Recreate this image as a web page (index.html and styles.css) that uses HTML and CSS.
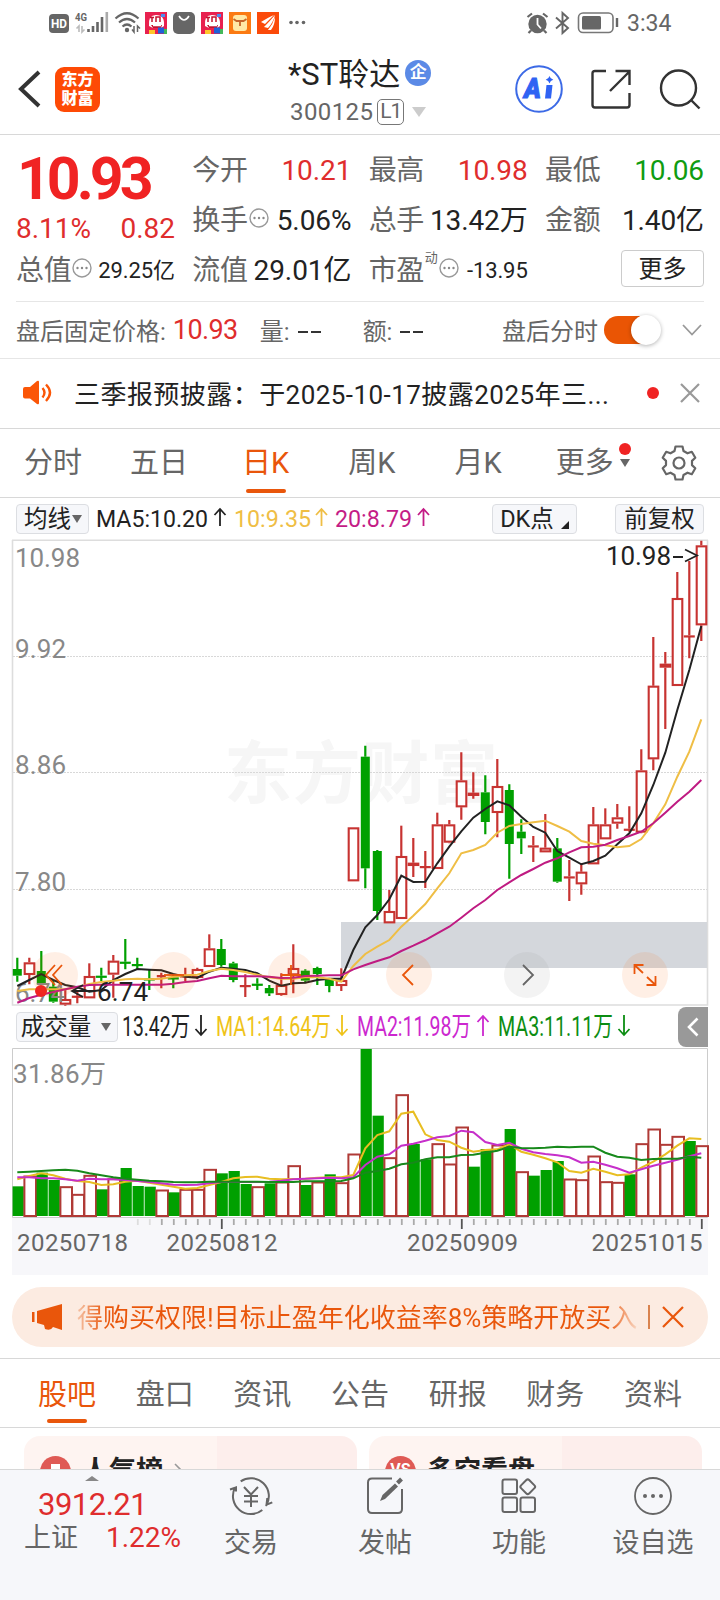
FILE: index.html
```html
<!DOCTYPE html>
<html lang="zh-CN">
<head>
  <meta charset="UTF-8">
  <meta name="viewport" content="width=device-width, initial-scale=1.0">
  <title>*ST聆达 300125</title>
  <link rel="stylesheet" href="styles.css">
</head>
<body>
  <div class="statusbar">
    <svg class="status-left" width="270" height="30" viewBox="45 8 270 30">
      <rect x="49" y="14" width="20" height="19" rx="4" fill="#666"/>
      <text x="51" y="28" font-size="12" font-weight="700" fill="#fff" textLength="16" lengthAdjust="spacingAndGlyphs">HD</text>
      <text x="75" y="21" font-size="11" font-weight="700" fill="#666" textLength="12" lengthAdjust="spacingAndGlyphs">4G</text>
      <path d="M79 32v-6l-2.500 2.500M82 26v6l2.500-2.500" fill="none" stroke="#bbb" stroke-width="1.600"/>
      <path d="M88.500 32v-3M93 32v-6M97.500 32V22M102 32V17" stroke="#666" stroke-width="2.600"/>
      <path d="M106.800 32V12" stroke="#aaa" stroke-width="2.600"/>
      <path d="M115.500 18.500q11.500-10.500 23 0M119 22.500q8-7 16 0M122.500 26.500q4.500-4 9 0" fill="none" stroke="#666" stroke-width="2.200"/>
      <circle cx="127" cy="30" r="2.200" fill="#666"/>
      <path d="M134 26v6l-2-2.500M137.500 32v-6l2.500 2.500" fill="none" stroke="#666" stroke-width="1.500"/>
      <g id="shopIcon">
        <rect x="145" y="12" width="22" height="22" fill="#e8214f"/>
        <path d="M149 26q-1-11 7-11 9 0 8 11l-3 2h-8z" fill="#fff"/>
        <path d="M150 17.500h4M152 17v5M156 22v-5h4v5" fill="none" stroke="#c3122f" stroke-width="1.500"/>
        <path d="M151 25h11l-1 3h-8z" fill="#c3122f"/>
        <path d="M153 25.500h8" stroke="#fff" stroke-width="1.500"/>
        <rect x="161" y="14" width="4" height="3" fill="#4b8cf0"/>
        <rect x="149" y="30" width="6" height="4" fill="#ffc62b"/>
        <rect x="158" y="27.500" width="6" height="6" fill="#1f62d8"/>
        <rect x="164" y="29" width="3" height="5" fill="#43b85a"/>
      </g>
      <rect x="173" y="12" width="22" height="22" rx="5" fill="#666"/>
      <path d="M179 16q5 8 10 0" fill="none" stroke="#fff" stroke-width="1.600"/>
      <use href="#shopIcon" x="56"/>
      <rect x="229" y="12" width="22" height="22" fill="#fb7a12"/>
      <rect x="233" y="15" width="14" height="16" rx="3" fill="#ffe9a6"/>
      <path d="M233.500 19l3 2h7l3-2M236.500 21h7M240 21v5" stroke="#c5652a" stroke-width="1.800" fill="none"/>
      <rect x="257" y="12" width="22" height="22" fill="#fb4a0a"/>
      <path d="M261 22q8-5 13-7-6 6-9 9zM264 27q6-6 11-12-2 8-7 13zM268 30q5-6 7-13 0 8-4 13z" fill="#fff"/>
      <circle cx="291" cy="22.500" r="1.800" fill="#666"/><circle cx="297" cy="22.500" r="1.800" fill="#666"/><circle cx="303.500" cy="22.500" r="1.800" fill="#666"/>
    </svg>
    <svg width="96" height="30" viewBox="525 8 96 30">
      <circle cx="537.500" cy="24" r="9.200" fill="#666"/>
      <path d="M527.500 17l4.500-3.500M547.500 17l-4.500-3.500M531 30.500l-2.500 2.500M544 30.500l2.500 2.500" stroke="#666" stroke-width="2.200"/>
      <path d="M537.500 18v6.500l3.500 4" fill="none" stroke="#fff" stroke-width="1.800"/>
      <path d="M556 17.500l12 10.500-5.500 5V13l5.500 5-12 10.500" fill="none" stroke="#666" stroke-width="1.900"/>
      <rect x="578.500" y="13" width="34.500" height="19.500" rx="4.500" fill="none" stroke="#777" stroke-width="1.600"/>
      <rect x="582" y="16" width="19" height="13.500" rx="1.500" fill="#666"/>
      <path d="M617 18v9" stroke="#666" stroke-width="2.400"/>
    </svg>
    <span class="clock">3:34</span>
  </div>

  <header class="header">
    <div class="header-side">
      <svg class="back" width="24" height="38" viewBox="0 0 24 38"><path d="M21 2L3 19l18 17" fill="none" stroke="#333" stroke-width="4"/></svg>
      <div class="logo">东方<br>财富</div>
    </div>
    <div class="stock">
      <div class="stock-name">*ST聆达<span class="badge">企</span></div>
      <div class="stock-code">300125<span class="level">L1</span><i class="tri tri-light"></i></div>
    </div>
    <div class="header-side header-right">
      <svg width="48" height="48" viewBox="0 0 48 48">
        <circle cx="24" cy="24" r="22.800" fill="#fff" stroke="#3c6ae6" stroke-width="2"/>
        <text x="9" y="33" font-size="27" font-weight="900" font-style="italic" fill="#2f63f3" stroke="#2f63f3" textLength="17" lengthAdjust="spacingAndGlyphs">A</text>
        <path d="M31.500 20h6l-1.500 13.500h-6z" fill="#2f63f3"/>
        <path d="M34.500 11q.8 3 3.800 3.800-3 .8-3.800 3.800-.8-3-3.800-3.800 3-.8 3.800-3.800z" fill="#2f63f3"/>
      </svg>
      <svg width="40" height="40" viewBox="0 0 40 40" fill="none" stroke="#333" stroke-width="2.400">
        <path d="M15 2H4q-2.500 0-2.500 2.500V36q0 2.500 2.500 2.500h32q2.500 0 2.500-2.500V24M19 22L38 3M24.500 2h14v14"/>
      </svg>
      <svg width="42" height="42" viewBox="0 0 42 42" fill="none" stroke="#333" stroke-width="2.400">
        <circle cx="19.500" cy="20" r="17.500"/><path d="M32 32l8.500 8.500"/>
      </svg>
    </div>
  </header>

  <section class="quote">
    <div class="col">
      <div class="price red">10.93</div>
      <div class="change red"><span>8.11%</span><span>0.82</span></div>
      <div class="row"><label>总值</label><svg class="dots" viewBox="0 0 20 20"><use href="#dotsIcon"/></svg><b class="small">29.25亿</b></div>
    </div>
    <div class="col">
      <div class="row"><label>今开</label><b class="red">10.21</b></div>
      <div class="row"><label>换手</label><svg class="dots" viewBox="0 0 20 20"><g id="dotsIcon"><circle cx="10" cy="10" r="9" fill="none" stroke="#999" stroke-width="1.400"/><circle cx="5.500" cy="10" r="1.200" fill="#888"/><circle cx="10" cy="10" r="1.200" fill="#888"/><circle cx="14.500" cy="10" r="1.200" fill="#888"/></g></svg><b>5.06%</b></div>
      <div class="row"><label>流值</label><b>29.01亿</b></div>
    </div>
    <div class="col">
      <div class="row"><label>最高</label><b class="red">10.98</b></div>
      <div class="row"><label>总手</label><b>13.42万</b></div>
      <div class="row"><label>市盈<sup>动</sup></label><svg class="dots" viewBox="0 0 20 20"><use href="#dotsIcon"/></svg><b class="small">-13.95</b></div>
    </div>
    <div class="col">
      <div class="row"><label>最低</label><b class="green">10.06</b></div>
      <div class="row"><label>金额</label><b>1.40亿</b></div>
      <div class="row"><button class="more">更多</button></div>
    </div>
  </section>

  <section class="after">
    <span class="after-price">盘后固定价格:</span><b class="red">10.93</b>
    <span class="after-vol">量:</span><i class="dash"></i>
    <span class="after-amt">额:</span><i class="dash"></i>
    <span class="after-switch">盘后分时</span>
    <span class="toggle"></span>
    <svg width="20" height="12" viewBox="0 0 20 12"><path d="M1 1l9 9.500L19 1" fill="none" stroke="#999" stroke-width="1.800"/></svg>
  </section>

  <section class="notice">
    <svg width="32" height="26" viewBox="0 0 32 26">
      <path d="M1 9q0-2 2-2h5l7-6q2-1 2 1v21q0 2-2 1l-7-5.500H3q-2 0-2-2z" fill="#fb5607"/>
      <path d="M20.500 8q4 4.500 0 9.500M24 4.500q8 8 0 16.500" fill="none" stroke="#fb5607" stroke-width="2.400"/>
    </svg>
    <p>三季报预披露：于2025-10-17披露2025年三...</p>
    <i class="reddot"></i>
    <svg width="20" height="20" viewBox="0 0 20 20"><path d="M1 1l18 18M19 1L1 19" stroke="#999" stroke-width="2.200"/></svg>
  </section>

  <nav class="periods">
    <a>分时</a><a>五日</a><a class="active">日K</a><a>周K</a><a>月K</a>
    <a class="period-more">更多<i class="reddot"></i><i class="tri"></i></a>
    <svg class="gear" width="36" height="36" viewBox="-18 -18 36 36" fill="none" stroke="#666" stroke-width="2.200">
      <path d="M-3.500-16.500h7l1 4.500 4 2.300 4.300-1.500 3.500 6-3.300 3.100v4.200l3.300 3.100-3.500 6-4.300-1.500-4 2.300-1 4.500h-7l-1-4.500-4-2.300-4.300 1.500-3.500-6 3.300-3.100v-4.200l-3.300-3.100 3.500-6 4.300 1.500 4-2.300z" stroke-linejoin="round"/>
      <circle r="5.500"/>
    </svg>
  </nav>

  <div class="legend">
    <button class="chip">均线<i class="tri"></i></button>
    <svg width="340" height="30" viewBox="94 504 340 30" font-size="24">
      <text x="96" y="527" textLength="112" lengthAdjust="spacingAndGlyphs" fill="#222">MA5:10.20</text>
      <path d="M220 526v-17M214.500 515l5.500-6 5.500 6" class="arrow" stroke="#222"/>
      <text x="234" y="527" textLength="77" lengthAdjust="spacingAndGlyphs" fill="#efbe45">10:9.35</text>
      <path d="M321.500 526v-17M316 515l5.500-6 5.500 6" class="arrow" stroke="#efbe45"/>
      <text x="335" y="527" textLength="77" lengthAdjust="spacingAndGlyphs" fill="#c41c86">20:8.79</text>
      <path d="M423.500 526v-17M418 515l5.500-6 5.500 6" class="arrow" stroke="#c41c86"/>
    </svg>
    <button class="chip chip-dk">DK点<i class="corner"></i></button>
    <button class="chip chip-fq">前复权</button>
  </div>

  <svg id="kline" width="720" height="467" viewBox="0 539 720 467"></svg>

  <div class="legend legend-vol">
    <button class="chip chip-vol">成交量<i class="tri"></i></button>
    <svg width="520" height="34" viewBox="119 1010 520 34" font-size="27">
      <text x="122" y="1036" textLength="68" lengthAdjust="spacingAndGlyphs" fill="#222">13.42万</text>
      <path d="M201 1015v20M195.500 1029l5.500 6 5.500-6" class="arrow" stroke="#222"/>
      <text x="216" y="1036" textLength="115" lengthAdjust="spacingAndGlyphs" fill="#efc319">MA1:14.64万</text>
      <path d="M342 1015v20M336.500 1029l5.500 6 5.500-6" class="arrow" stroke="#efc319"/>
      <text x="357" y="1036" textLength="114" lengthAdjust="spacingAndGlyphs" fill="#cc27cf">MA2:11.98万</text>
      <path d="M483 1036v-20M477.500 1022l5.500-6 5.500 6" class="arrow" stroke="#cc27cf"/>
      <text x="498" y="1036" textLength="115" lengthAdjust="spacingAndGlyphs" fill="#0c8d12">MA3:11.11万</text>
      <path d="M624 1015v20M618.500 1029l5.500 6 5.500-6" class="arrow" stroke="#0c8d12"/>
    </svg>
    <div class="drawer"><svg width="12" height="20" viewBox="0 0 12 20"><path d="M10.500 1.500L2 10l8.500 8.500" fill="none" stroke="#fff" stroke-width="2.600"/></svg></div>
  </div>

  <svg id="volume" width="720" height="170" viewBox="0 1048 720 170"></svg>
  <div class="axis">
    <svg id="ticks" width="696" height="12" viewBox="12 1218 696 12"></svg>
    <div class="dates"><span>20250718</span><span class="d2">20250812</span><span class="d3">20250909</span><span class="d4">20251015</span></div>
  </div>

  <div class="ad">
    <svg width="32" height="28" viewBox="0 0 32 28" fill="#e9560b"><path d="M1 9h2.500v10H1zM6 8L31 1v26l-9-3q-2 4-8 2l-1-4-7-2z"/></svg>
    <p>得购买权限!目标止盈年化收益率8%策略开放买入</p>
    <i class="bar"></i>
    <svg width="22" height="22" viewBox="0 0 22 22"><path d="M1 1l20 20M21 1L1 21" stroke="#e9560b" stroke-width="2.200"/></svg>
  </div>

  <nav class="tabs">
    <a class="active">股吧</a><a>盘口</a><a>资讯</a><a>公告</a><a>研报</a><a>财务</a><a>资料</a>
  </nav>

  <div class="cards">
    <div class="card"><i class="card-icon"><i class="flag"></i></i><span>人气榜</span><svg width="10" height="16" viewBox="0 0 10 16"><path d="M1 1l7 7-7 7" fill="none" stroke="#999" stroke-width="1.600"/></svg></div>
    <div class="card"><i class="card-icon">VS</i><span>多空看盘</span></div>
  </div>

  <footer class="bottom">
    <div class="index">
      <i class="tri-up"></i>
      <div class="index-value red">3912.21</div>
      <div class="index-row"><span>上证</span><span class="red">1.22%</span></div>
    </div>
    <div class="action">
      <svg viewBox="0 0 44 40" width="44" height="40" fill="none" stroke="#666" stroke-width="2">
        <path d="M11.700 5.300A18 18 0 0 1 37 29.900M33.300 34A18 18 0 0 1 6.100 11.500M1 13.500l6-2v4M43.300 26.300l-5.800 2.400.8-6.700M15 11l7 7.500 7-7.500M15 20h14M15 25.500h14M22 18.500V31"/>
      </svg>交易
    </div>
    <div class="action">
      <svg viewBox="0 0 44 40" width="44" height="40" fill="none" stroke="#666" stroke-width="2">
        <path d="M29 2.500H9q-4 0-4 4V33q0 4 4 4h26q4 0 4-4V13"/>
        <path d="M17 25l2.500-6L32 7.500l3 3L22 23z" fill="#666" stroke="none"/><path d="M34.500 7l4-4" stroke-width="4"/>
      </svg>发帖
    </div>
    <div class="action">
      <svg viewBox="0 0 44 40" width="44" height="40" fill="none" stroke="#666" stroke-width="2">
        <rect x="5.500" y="3.500" width="14.500" height="14.500" rx="2"/><rect x="5.500" y="21.500" width="14.500" height="14.500" rx="2"/><rect x="23.500" y="21.500" width="14.500" height="14.500" rx="2"/>
        <rect x="25" y="5" width="11.500" height="11.500" rx="2" transform="rotate(45 30.750 10.750)"/>
      </svg>功能
    </div>
    <div class="action">
      <svg viewBox="0 0 44 40" width="44" height="40">
        <circle cx="22" cy="20" r="18" fill="none" stroke="#666" stroke-width="1.800"/>
        <circle cx="14" cy="20" r="2" fill="#666"/><circle cx="22" cy="20" r="2" fill="#666"/><circle cx="30" cy="20" r="2" fill="#666"/>
      </svg>设自选
    </div>
  </footer>

  <script src="chart.js"></script>
</body>
</html>
```
FILE: styles.css
```css
* {
  box-sizing: border-box;
}
body {
  margin: 0;
  width: 720px;
  height: 1600px;
  overflow: hidden;
  background: #fff;
  color: #666;
  font-family: Roboto, "Noto Sans CJK SC", sans-serif;
  display: flex;
  flex-direction: column;
}
body > * {
  flex-shrink: 0;
}
svg {
  display: block;
  flex-shrink: 0;
}
b {
  font-weight: 400;
  color: #222;
}
i {
  font-style: normal;
}
p {
  margin: 0;
}
.red, b.red {
  color: #df2d2d;
}
.green, b.green {
  color: #109c10;
}
.reddot {
  width: 12px;
  height: 12px;
  border-radius: 50%;
  background: #f02323;
}
.tri {
  border: 5px solid transparent;
  border-top: 8px solid #666;
  border-bottom: 0;
}
.tri-light {
  border-width: 10px 7px 0;
  border-top-color: #ccc;
  margin-left: 8px;
}
.arrow {
  fill: none;
  stroke-width: 1.8;
}

/* status bar */
.statusbar {
  height: 44px;
  padding: 8px 0 0 45px;
  display: flex;
}
.status-left {
  margin-right: 210px;
}
.clock {
  margin-left: 6px;
  font-size: 23px;
  line-height: 32px;
}

/* header */
.header {
  height: 91px;
  border-bottom: 1px solid #d8d8d8;
  display: flex;
  justify-content: space-between;
}
.header-side {
  width: 240px;
  padding-left: 18px;
  display: flex;
  align-items: center;
}
.header-right {
  padding: 0 19px 0 0;
  justify-content: flex-end;
  gap: 28px;
}
.logo {
  width: 45px;
  height: 45px;
  margin-left: 13px;
  border-radius: 9px;
  background: #fe4a05;
  color: #fff;
  font-size: 16px;
  font-weight: 900;
  line-height: 19px;
  padding-top: 3px;
  text-align: center;
}
.stock {
  width: 240px;
  padding: 8px 0 0 48px;
}
.stock-name {
  display: flex;
  align-items: center;
  height: 38px;
  color: #222;
  font-size: 31px;
}
.badge {
  width: 26px;
  height: 26px;
  margin: 4px 0 0 5px;
  border-radius: 50%;
  background: #5b8ae6;
  color: #fff;
  font-size: 17px;
  line-height: 25px;
  font-weight: 700;
  text-align: center;
}
.stock-code {
  display: flex;
  align-items: center;
  height: 40px;
  margin: 2px 0 0 2px;
  font-size: 24px;
  letter-spacing: .4px;
}
.level {
  width: 27px;
  height: 26px;
  margin-left: 4px;
  border: 1.5px solid #777;
  border-radius: 5px;
  font-size: 21px;
  line-height: 23px;
  letter-spacing: -1px;
  text-align: center;
}

/* quote */
.quote {
  display: flex;
  justify-content: space-between;
  margin: 0 16px;
  height: 167px;
  padding-top: 11px;
  border-bottom: 1px solid #e6e6e6;
}
.col {
  width: 159px;
}
.price {
  height: 64px;
  padding-left: 1px;
  font-size: 59px;
  line-height: 66px;
  font-weight: 700;
  letter-spacing: -4px;
  color: #f02323;
}
.change {
  display: flex;
  justify-content: space-between;
  height: 36px;
  font-size: 28px;
  line-height: 37px;
}
.row {
  display: flex;
  align-items: center;
  height: 50px;
  font-size: 28px;
  line-height: 50px;
}
.row label {
  position: relative;
  letter-spacing: -.3px;
}
.row b {
  margin-left: auto;
  letter-spacing: -.1px;
  white-space: nowrap;
}
.row b.small {
  font-size: 22px;
}
.row sup {
  position: absolute;
  left: 56px;
  top: -13px;
  font-size: 13px;
}
.dots {
  width: 20px;
  height: 20px;
  margin: -6px 0 0 1px;
}
label:has(sup) + .dots {
  margin-left: 15px;
}
.more {
  width: 83px;
  height: 37px;
  margin: -5px 0 0 auto;
  padding: 0;
  border: 1px solid #ccc;
  border-radius: 4px;
  background: #fff;
  color: #222;
  font: 24px/36px Roboto, "Noto Sans CJK SC", sans-serif;
}

/* after-hours row */
.after {
  display: flex;
  align-items: center;
  height: 57px;
  padding: 0 18px 1px 16px;
  border-bottom: 1px solid #e6e6e6;
  font-size: 24px;
}
.after b {
  width: 94px;
  padding-left: 7px;
  font-size: 27px;
  letter-spacing: -.6px;
}
.dash {
  width: 24px;
  height: 2px;
  margin: 4px 0 0 8px;
  background: linear-gradient(90deg, #333 10px, transparent 10px, transparent 13px, #333 13px, #333 23px, transparent 23px);
}
.after-amt {
  margin-left: 41px;
}
.after-switch {
  margin-left: auto;
}
.toggle {
  width: 57px;
  height: 28px;
  margin: 0 21px 0 6px;
  border-radius: 14px;
  background: linear-gradient(90deg, #ea5504 42px, #fff 42px);
}
.toggle::after {
  content: "";
  display: block;
  width: 30px;
  height: 30px;
  margin: -1px 0 0 27px;
  border-radius: 50%;
  background: #fff;
  box-shadow: 0 1px 4px rgba(0, 0, 0, .3);
}

/* notice */
.notice {
  display: flex;
  align-items: center;
  height: 70px;
  padding: 0 20px 2px 22px;
  border-bottom: 1px solid #d8d8d8;
}
.notice p {
  margin-left: 20px;
  color: #222;
  font-size: 26px;
  letter-spacing: .45px;
  white-space: nowrap;
}
.notice .reddot {
  margin: 0 21px 0 auto;
}

/* chart periods */
.periods {
  display: flex;
  align-items: center;
  height: 69px;
  padding-left: 24px;
  border-bottom: 1px solid #d8d8d8;
  font-size: 29px;
  line-height: 71px;
}
.periods a {
  margin-right: 59px;
}
.periods a:nth-child(1) {
  margin-right: 48px;
}
.periods a:nth-child(2), .periods a:nth-child(5) {
  margin-right: 54px;
}
.periods .active, .tabs .active {
  position: relative;
  color: #e9560b;
}
.active::after {
  content: "";
  position: absolute;
  left: 50%;
  bottom: 6px;
  width: 40px;
  height: 4px;
  margin-left: -20px;
  border-radius: 2px;
  background: #e9560b;
}
.periods .period-more {
  position: relative;
  padding-right: 17px;
  margin-right: 30px;
}
.period-more .reddot {
  position: absolute;
  right: 0;
  top: 15px;
}
.period-more .tri {
  position: absolute;
  right: 1px;
  top: 31px;
}

/* chart legends */
.legend {
  display: flex;
  align-items: center;
  height: 41px;
  padding: 1px 16px 0;
}
.chip {
  display: flex;
  align-items: center;
  justify-content: center;
  width: 73px;
  height: 30px;
  padding: 0;
  border: 1px solid #dcdee2;
  border-radius: 4px;
  background: #f6f7fa;
  color: #222;
  font: 23.5px/28px Roboto, "Noto Sans CJK SC", sans-serif;
  white-space: nowrap;
  margin-right: 5px;
}
.chip > .tri {
  margin-left: 1px;
  margin-right: -1px;
}
.chip-dk {
  width: 85px;
  margin: 0 38px 0 auto;
}
.chip-fq {
  width: 89px;
  margin: 0;
}
.corner {
  align-self: flex-end;
  margin: 0 0 4px 7px;
  border-left: 8px solid transparent;
  border-bottom: 8px solid #222;
}
.legend-vol {
  height: 42px;
  padding: 0 12px 0 16px;
}
.chip-vol {
  width: 102px;
  margin-right: 1px;
  padding-right: 3px;
}
.chip-vol > .tri {
  margin-left: 10px;
}
.drawer {
  display: flex;
  align-items: center;
  justify-content: center;
  width: 30px;
  height: 40px;
  margin-left: auto;
  border-radius: 8px 0 0 8px;
  background: #999;
}
.axis {
  height: 57px;
  margin: 0 12px;
  background: #f7f7fa;
}
.dates {
  display: flex;
  padding-left: 5px;
  font-size: 24px;
  line-height: 27px;
  letter-spacing: .45px;
}
.d2 {
  margin-left: 38px;
}
.d3 {
  margin-left: 129px;
}
.d4 {
  margin-left: 73px;
}

/* promo bar */
.ad {
  display: flex;
  align-items: center;
  height: 60px;
  margin: 12px 12px 11px;
  padding: 0 24px 0 19px;
  border-radius: 30px;
  background: #fcebe1;
}
.ad p {
  margin: -4px 0 0 14px;
  font-size: 26px;
  white-space: nowrap;
  color: transparent;
  background: linear-gradient(90deg, #f5c4a8, #e9560b 28px, #e9560b 530px, #f8d6c2);
  -webkit-background-clip: text;
  background-clip: text;
}
.bar {
  width: 2px;
  height: 24px;
  margin: 0 12px 0 auto;
  background: #d9834f;
}

/* content tabs */
.tabs {
  display: flex;
  justify-content: space-between;
  height: 70px;
  padding: 0 38px;
  border-top: 1px solid #d8d8d8;
  border-bottom: 1px solid #d8d8d8;
  font-size: 29px;
  line-height: 72px;
}
.tabs .active::after {
  bottom: 4px;
}
.cards {
  display: flex;
  justify-content: space-between;
  height: 41px;
  padding: 8px 18px 0 24px;
  overflow: hidden;
}
.card {
  display: flex;
  align-items: center;
  width: 333px;
  height: 90px;
  padding: 0 0 20px 16px;
  border-radius: 16px;
  background: linear-gradient(90deg, #fef4f1 58%, #fdeeec 58%);
  color: #222;
  font-size: 27px;
  font-weight: 700;
}
.card span {
  margin-top: -6px;
}
.card-icon {
  width: 31px;
  height: 31px;
  margin-right: 11px;
  border-radius: 50%;
  background: #df5a55;
  color: #fff;
  font-size: 16px;
  line-height: 28px;
  text-align: center;
}
.flag {
  display: block;
  width: 9px;
  height: 14px;
  margin: 8px auto;
  background: #fff;
}
.card svg {
  margin-left: 11px;
}

/* bottom bar */
.bottom {
  position: relative;
  display: flex;
  height: 131px;
  border-top: 1px solid #d8d8d8;
  background: #f6f7fa;
}
.index {
  width: 184px;
  padding: 6px 3px 0 24px;
}
.tri-up {
  display: block;
  width: 0;
  margin-left: 61px;
  border: 7px solid transparent;
  border-bottom: 5px solid #888;
  border-top: 0;
}
.index-value {
  padding-left: 14px;
  font-size: 31px;
  line-height: 48px;
  letter-spacing: -.5px;
}
.index-row {
  display: flex;
  justify-content: space-between;
  font-size: 27px;
  line-height: 18px;
}
.index-row .red {
  font-size: 28px;
}
.action {
  width: 134px;
  padding-top: 6px;
  display: flex;
  flex-direction: column;
  align-items: center;
  font-size: 27px;
  line-height: 54px;
}
```
FILE: chart.js
```js
const RED = "#c73331", GREEN = "#00a000";
const X0 = 17.3, STEP = 12;
const xAt = i => X0 + STEP * i;

// [up, high, top, bottom, low] in thirds of a pixel
const candles = [
  [0,1283,1317,1337,1355],[1,1283,1297,1335,1363],[0,1263,1323,1363,1365],[0,1350,1370,1415,1418],
  [1,1380,1407,1424,1427],[1,1385,1397,1401,1420],[1,1300,1338,1405,1405],[0,1313,1337,1340,1353],
  [1,1275,1292,1334,1403],[0,1227,1295,1299,1318],[0,1283,1302,1305,1317],[0,1317,1345,1348,1380],
  [1,1328,1335,1342,1375],[0,1335,1342,1345,1375],[1,1313,1336,1340,1353],[1,1313,1317,1344,1348],
  [1,1213,1255,1311,1311],[0,1227,1257,1305,1310],[0,1295,1300,1350,1357],[1,1333,1365,1369,1401],
  [0,1345,1361,1364,1380],[0,1365,1374,1390,1398],[1,1330,1365,1395,1397],[1,1243,1314,1336,1390],
  [0,1318,1322,1352,1360],[0,1310,1314,1332,1365],[0,1345,1350,1368,1387],[1,1315,1350,1368,1383],
  [1,892,892,1054,1054],[0,647,680,1015,1075],[0,960,963,1143,1170],[1,1080,1143,1180,1180],
  [1,887,978,1167,1167],[1,924,998,1008,1041],[1,963,1008,1013,1074],[1,848,883,1017,1017],
  [1,870,883,938,940],[1,667,751,832,869],[1,727,788,798,806],[0,736,787,876,913],
  [1,687,768,849,922],[0,763,780,942,1046],[0,868,905,925,972],[1,918,946,952,996],
  [1,852,953,967,967],[0,924,955,1055,1058],[1,990,1039,1045,1113],[1,1000,1025,1063,1094],
  [1,831,883,1003,1003],[1,835,883,928,928],[1,822,862,881,896],[1,829,896,901,905],
  [1,658,721,908,910],[1,321,467,688,721],[1,366,401,413,597],[1,126,204,468,468],
  [1,93,316,321,385],[1,32,46,286,333]
];
const ma5 = [1368,1350,1332,1350,1365,1372,1385,1380,1350,1332,1317,1319,1321,1332,1340,1343,1325,1313,1316,1320,1330,1352,1367,1360,1358,1350,1346,1346,1260,1192,1155,1108,1037,1056,1055,1000,950,904,863,837,814,826,860,891,908,963,983,1003,993,977,943,910,850,765,668,540,420,288];
const ma10 = [1383,1378,1378,1378,1378,1372,1362,1356,1352,1348,1346,1348,1346,1340,1336,1334,1323,1316,1320,1326,1334,1342,1346,1346,1342,1342,1346,1355,1308,1272,1250,1230,1190,1157,1122,1075,1030,970,960,945,908,888,882,877,872,888,905,933,941,946,952,948,927,880,823,740,665,568];
const ma20 = [1418,1404,1394,1386,1378,1370,1365,1364,1364,1364,1364,1364,1364,1361,1356,1353,1345,1337,1339,1339,1339,1340,1344,1343,1338,1337,1336,1336,1318,1305,1293,1282,1263,1247,1230,1210,1190,1163,1135,1110,1080,1057,1035,1017,998,985,967,952,950,944,930,918,905,880,848,815,785,750];

const volTops = [859,828,818,840,860,883,826,868,836,804,858,860,870,877,868,868,808,820,813,852,860,850,846,797,855,846,823,848,762,447,647,773,584,732,778,731,792,681,800,747,735,687,815,827,810,783,837,839,768,845,847,823,731,687,733,709,723,737];
const volGreen = [0,2,3,7,9,10,11,13,17,18,19,21,24,26,29,30,33,34,38,39,41,43,44,45,51,56];
const vma1 = [838,828,820,826,836,843,846,855,853,845,842,848,854,860,866,864,855,846,835,831,830,836,838,837,836,833,832,832,825,745,705,694,641,635,703,720,725,743,755,750,748,733,755,764,775,787,813,818,806,815,826,823,803,785,763,737,715,717];
const vma2 = [832,832,835,835,838,842,836,838,838,840,843,846,850,854,855,854,850,846,846,846,846,845,842,838,836,835,833,835,832,795,770,763,737,731,722,712,708,692,697,726,735,728,746,757,762,766,772,788,785,794,805,818,808,797,788,779,769,760];
const vma3 = [817,815,813,811,809,812,820,826,832,836,839,842,844,846,847,847,845,845,845,845,845,846,846,846,844,844,844,843,835,818,813,806,793,788,778,772,772,765,764,758,752,740,744,745,743,740,742,740,740,758,770,773,780,777,776,776,770,773];

function line(data, base, color) {
  const pts = data.map((v, i) => xAt(i) + "," + (base + v / 3).toFixed(1)).join(" ");
  return `<polyline points="${pts}" fill="none" stroke="${color}" stroke-width="2"/>`;
}

function drawKline() {
  let s = `<text x="224" y="798" font-size="68" font-weight="700" fill="#f6f6f6" textLength="274">东方财富</text>`;
  s += `<path d="M12 540.300H708" stroke="#ddd" stroke-width="1.600"/><path d="M12.500 540V1005H707.500V540" fill="none" stroke="#ddd" stroke-width="1.600"/>`;
  [656.5, 772.5, 889.5].forEach(y => {
    s += `<path d="M13 ${y}H707" stroke="#d8d8d8" stroke-dasharray="2 1"/>`;
  });
  s += `<rect x="341" y="922" width="366" height="46" fill="#d4d7dc"/>`;
  candles.forEach(([up, high, top, bottom, low], i) => {
    const x = xAt(i);
    const [h, t, b, l] = [high, top, bottom, low].map(v => 530 + v / 3);
    const color = up ? RED : GREEN;
    s += `<path d="M${x} ${h}V${t}M${x} ${b}V${l}" stroke="${color}" stroke-width="2.200"/>`;
    if (up && b - t > 3) {
      s += `<rect x="${x - 4.6}" y="${t + 1}" width="9.600" height="${Math.max(b - t - 2, 1)}" fill="#fff" stroke="${color}" stroke-width="2.100"/>`;
    } else {
      const w = b - t < 2.2 ? 11 : 9;
      s += `<rect x="${x - w / 2}" y="${t}" width="${w}" height="${Math.max(b - t, 2.2)}" fill="${color}"/>`;
    }
  });
  [["10.98", 567, 65], ["9.92", 658, 51], ["8.86", 774, 51], ["7.80", 891, 51], ["6.74", 1002, 50]].forEach(([t, y, w]) => {
    s += `<text x="15" y="${y}" font-size="26" fill="#888" textLength="${w}">${t}</text>`;
  });
  s += line(ma5, 530, "#222") + line(ma10, 530, "#efbe45") + line(ma20, 530, "#bf1b82");
  s += `<circle cx="41" cy="991" r="6" fill="#f02323"/>`;
  s += `<path d="M83 985l-11 6 11 6M72 991H95" fill="none" stroke="#222" stroke-width="1.800"/>`;
  s += `<text x="97" y="1001" font-size="26" fill="#222" textLength="51">6.74</text>`;
  s += `<text x="606" y="565" font-size="26" fill="#222" textLength="65">10.98</text>`;
  s += `<path d="M673 557h10M685 549.500l12 6-12 6" fill="none" stroke="#222" stroke-width="1.800"/>`;
  [55, 173.5, 291, 409, 527, 645].forEach(x => {
    s += `<circle cx="${x}" cy="975" r="23" fill="${x === 527 ? "#888" : "#f60"}" fill-opacity=".1"/>`;
  });
  s += `<path d="M55 965l-9 10 9 10M62 965l-9 10 9 10M413 965l-10 10 10 10M291 965v20M281 975h20" class="arrow" stroke="#e9560b"/>`;
  s += `<path d="M164 975h20" class="arrow" stroke="#e9560b"/>`;
  s += `<path d="M523 965l10 10-10 10" class="arrow" stroke="#666"/>`;
  s += `<path d="M634.500 974v-9h9M635 965.500l8 7.500M655.500 976v9h-9M655 984.500l-8-7.500" class="arrow" stroke="#e9560b"/>`;
  document.getElementById("kline").innerHTML = s;
}

function drawVolume() {
  let s = `<path d="M12.500 1217.500V1048.500H707.500V1217.500Z" fill="none" stroke="#ccc"/>`;
  s += `<text x="13" y="1083" font-size="26" fill="#888" textLength="93">31.86万</text>`;
  volTops.forEach((v, i) => {
    const x = 12.6 + STEP * i, y = 900 + v / 3;
    if (volGreen.includes(i)) {
      s += `<rect x="${x}" y="${y}" width="11.200" height="${1216 - y}" fill="${GREEN}"/>`;
    } else {
      s += `<rect x="${x - .2}" y="${y + .5}" width="11.600" height="${1215.500 - y}" fill="#fff" stroke="#b03a36" stroke-width="2"/>`;
    }
  });
  s += line(vma1, 900, "#e8be22") + line(vma2, 900, "#c62fca") + line(vma3, 900, "#17891b");
  document.getElementById("volume").innerHTML = s;
}

function drawTicks() {
  let s = "";
  for (let i = 10; i < 58; i++) {
    const major = i % 20 === 17;
    s += `<path d="M${17.8 + STEP * i} 1219v${major ? 10 : 6}" stroke="${major ? "#555" : i < 12 ? "#ddd" : "#aaa"}" stroke-width="1.800"/>`;
  }
  document.getElementById("ticks").innerHTML = s;
}

drawKline();
drawVolume();
drawTicks();
```
